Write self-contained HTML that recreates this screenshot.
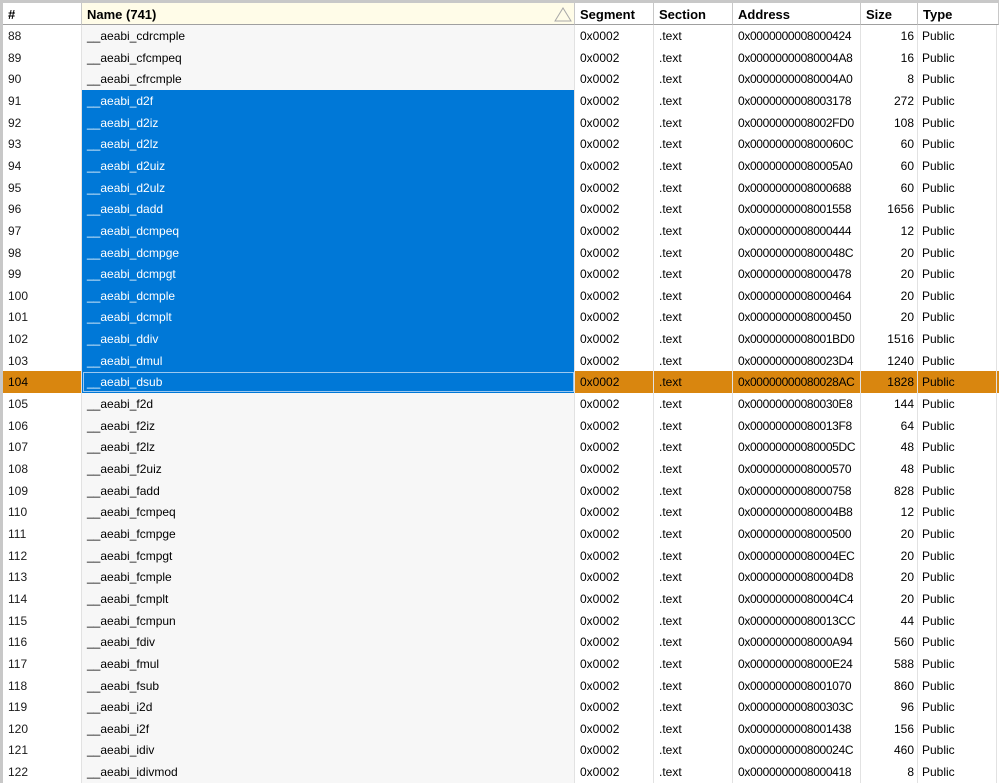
<!DOCTYPE html><html><head><style>
body{margin:0;width:999px;height:783px;overflow:hidden;background:#fff;font-family:"Liberation Sans",sans-serif;font-size:12px;position:relative}
.frame{position:absolute;left:0;top:0;width:999px;height:783px;border-left:3px solid #c8c8c8;border-top:3px solid #c8c8c8;box-sizing:border-box}
.h{position:absolute;top:3px;height:22px;line-height:24px;font-weight:bold;font-size:13px;color:#000;border-right:1px solid #c8c8c8;border-bottom:1px solid #a0a0a0;box-sizing:border-box;padding-left:5px;background:#fff;z-index:2}
.r{position:absolute;left:3px;width:996px;height:22px}
.c{position:absolute;top:0;height:100%;line-height:22px;box-sizing:border-box;padding-left:5px;border-right:1px solid #e2e2e2;white-space:nowrap;color:#000}
.a{letter-spacing:-0.35px}
</style></head><body>
<div class="frame"></div>
<div class="h" style="left:3px;width:79px">#</div>
<div class="h" style="left:82px;width:493px;background:#fffce8">Name (741)<svg style="position:absolute;right:2px;top:3px" width="18" height="16"><path d="M1 15 L9 2 L17 15 Z" fill="none" stroke="#a8a8a8"/></svg></div>
<div class="h" style="left:575px;width:79px">Segment</div>
<div class="h" style="left:654px;width:79px">Section</div>
<div class="h" style="left:733px;width:128px">Address</div>
<div class="h" style="left:861px;width:57px">Size</div>
<div class="h" style="left:918px;width:81px">Type</div>
<div id="rows"></div>
<script>
var d=[["cdrcmple","8000424",16],["cfcmpeq","80004A8",16],["cfrcmple","80004A0",8],["d2f","8003178",272],["d2iz","8002FD0",108],["d2lz","800060C",60],["d2uiz","80005A0",60],["d2ulz","8000688",60],["dadd","8001558",1656],["dcmpeq","8000444",12],["dcmpge","800048C",20],["dcmpgt","8000478",20],["dcmple","8000464",20],["dcmplt","8000450",20],["ddiv","8001BD0",1516],["dmul","80023D4",1240],["dsub","80028AC",1828],["f2d","80030E8",144],["f2iz","80013F8",64],["f2lz","80005DC",48],["f2uiz","8000570",48],["fadd","8000758",828],["fcmpeq","80004B8",12],["fcmpge","8000500",20],["fcmpgt","80004EC",20],["fcmple","80004D8",20],["fcmplt","80004C4",20],["fcmpun","80013CC",44],["fdiv","8000A94",560],["fmul","8000E24",588],["fsub","8001070",860],["i2d","800303C",96],["i2f","8001438",156],["idiv","800024C",460],["idivmod","8000418",8]];
var h="";
d.forEach(function(x,i){var n=88+i,top=25+i*21.65;var sel=n>=91&&n<=104,cur=n==104;
var rb=cur?"#d9860f":"#fff";var nb=sel?"#0078d7":"#f7f7f7";
h+='<div class="r" style="top:'+top+'px;background:'+rb+'">';
h+='<div class="c" style="left:0;width:79px;color:'+(cur?"#000":"#1a1a1a")+'">'+n+'</div>';
h+='<div class="c" style="left:79px;width:493px;background:'+nb+';color:'+(sel?"#fff":"#000")+(cur?';outline:1px solid #9cc8f0;outline-offset:-2px':'')+'">__aeabi_'+x[0]+'</div>';
h+='<div class="c" style="left:572px;width:79px">0x0002</div>';
h+='<div class="c" style="left:651px;width:79px">.text</div>';
h+='<div class="c a" style="left:730px;width:128px">0x000000000'+x[1]+'</div>';
h+='<div class="c" style="left:858px;width:57px;text-align:right;padding-right:3px">'+x[2]+'</div>';
h+='<div class="c" style="left:915px;width:79px;padding-left:4px">Public</div>';
h+='</div>';});
document.getElementById("rows").innerHTML=h;
</script>
</body></html>
